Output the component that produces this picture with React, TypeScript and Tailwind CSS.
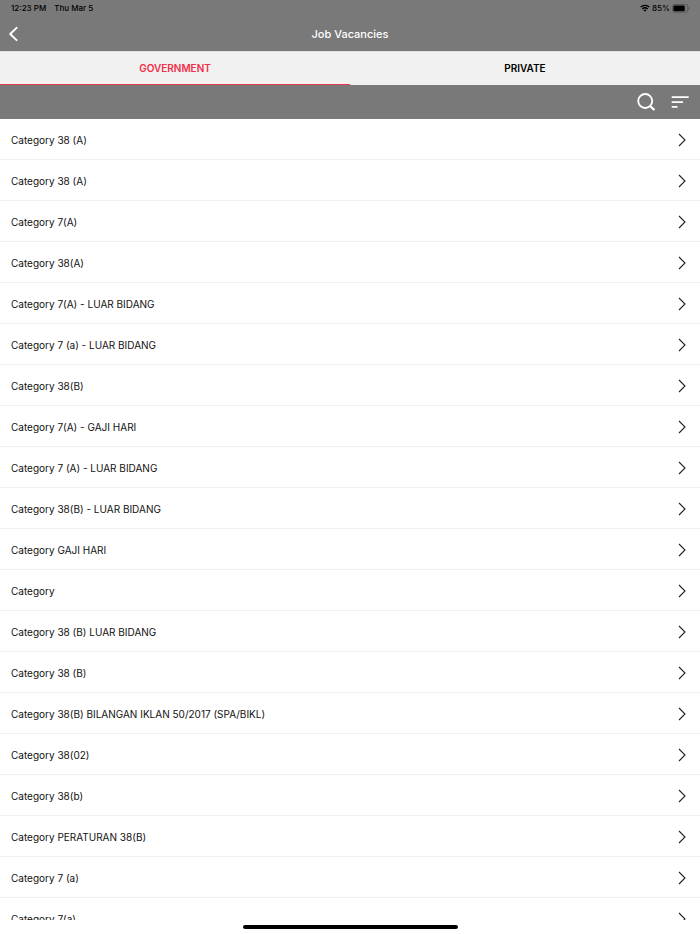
const categories = [
  "Category 38 (A)",
  "Category 38 (A)",
  "Category 7(A)",
  "Category 38(A)",
  "Category 7(A) - LUAR BIDANG",
  "Category 7 (a) - LUAR BIDANG",
  "Category 38(B)",
  "Category 7(A) - GAJI HARI",
  "Category 7 (A) - LUAR BIDANG",
  "Category 38(B) - LUAR BIDANG",
  "Category GAJI HARI",
  "Category",
  "Category 38 (B) LUAR BIDANG",
  "Category 38 (B)",
  "Category 38(B) BILANGAN IKLAN 50/2017 (SPA/BIKL)",
  "Category 38(02)",
  "Category 38(b)",
  "Category PERATURAN 38(B)",
  "Category 7 (a)",
  "Category 7(a)",
];

function StatusBar() {
  return (
    <div className="flex h-4 items-center justify-between pl-[11px] pr-[10px] text-[8px] leading-4 font-medium text-black">
      <div className="flex gap-2">
        <span>12:23 PM</span>
        <span>Thu Mar 5</span>
      </div>
      <div className="flex items-center gap-[2px]">
        <svg width="10" height="8" viewBox="0 0 10 8" fill="none" stroke="currentColor" strokeWidth="1.3" aria-hidden="true">
          <path d="M0.6 3.1C3.1 0.7 6.9 0.7 9.4 3.1" />
          <path d="M2.3 5C3.9 3.5 6.1 3.5 7.7 5" />
          <path d="M5 7.7 3.5 6.1Q5 4.9 6.5 6.1Z" fill="currentColor" stroke="none" />
        </svg>
        <span>85%</span>
        <svg width="18" height="9" viewBox="0 0 18 9" aria-hidden="true">
          <rect x="0.4" y="0.5" width="15.4" height="7.8" rx="2.2" fill="none" stroke="#4f4f4f" strokeWidth="0.7" />
          <rect x="1.4" y="1.5" width="11.4" height="5.8" rx="1.2" fill="#000" />
          <path d="M16.6 3v2.8c1.2-.4 1.2-2.4 0-2.8Z" fill="#4f4f4f" />
        </svg>
      </div>
    </div>
  );
}

function NavBar() {
  return (
    <div className="grid h-[35px] grid-cols-[1fr_auto_1fr] items-center">
      <button type="button" aria-label="Back" className="flex h-full w-10 items-center pl-2 text-white">
        <svg width="11" height="16" viewBox="0 0 11 16" fill="none" stroke="currentColor" strokeWidth="2" strokeLinecap="round" strokeLinejoin="round" aria-hidden="true">
          <path d="M8.6 1.9 2.2 8 8.6 14.1" />
        </svg>
      </button>
      <h1 className="text-[11px] leading-4 font-medium text-white">Job Vacancies</h1>
    </div>
  );
}

function Tabs() {
  return (
    <div role="tablist" className="grid h-[34px] grid-cols-2 border-t border-[#e2e2e2] bg-[#f1f1f1] text-[10px] leading-4 font-semibold">
      <button type="button" role="tab" aria-selected="true" className="border-b border-[#e8394f] text-[#f02f49]">
        GOVERNMENT
      </button>
      <button type="button" role="tab" aria-selected="false" className="border-b border-[#f1f1f1] text-black">
        PRIVATE
      </button>
    </div>
  );
}

function Toolbar() {
  return (
    <div className="flex h-[34px] items-center justify-end gap-[14px] pr-[10px] text-white">
      <button type="button" aria-label="Search">
        <svg width="20" height="20" viewBox="0 0 20 20" fill="none" stroke="currentColor" strokeWidth="1.8" strokeLinecap="round" aria-hidden="true">
          <circle cx="9.2" cy="9" r="7" />
          <path d="M14.2 14.2 17.8 17.4" strokeWidth="2.2" />
        </svg>
      </button>
      <button type="button" aria-label="Sort">
        <svg width="20" height="20" viewBox="0 0 20 20" fill="currentColor" aria-hidden="true">
          <rect x="1.6" y="4.3" width="17.2" height="1.8" rx="0.6" />
          <rect x="1.6" y="9.2" width="11.5" height="1.8" rx="0.6" />
          <rect x="1.6" y="14" width="6" height="1.8" rx="0.6" />
        </svg>
      </button>
    </div>
  );
}

export default function App() {
  return (
    <div className="flex h-screen flex-col bg-white font-['Inter',sans-serif]">
      <header className="shrink-0 bg-[#797979]">
        <StatusBar />
        <NavBar />
        <Tabs />
        <Toolbar />
      </header>

      <main className="min-h-0 flex-1 overflow-hidden">
        <ul>
          {categories.map((name, idx) => (
            <li key={idx} className="border-b border-[#f0f0f0]">
              <a href="#" className="flex h-10 items-center justify-between pt-[2px] pr-[13px] pl-[11px] text-[10px] leading-4 text-[#111]">
                <span>{name}</span>
                <svg width="10" height="14" viewBox="0 0 10 14" fill="none" stroke="#222" strokeWidth="1.1" aria-hidden="true">
                  <path d="M2 1 8 7 2 13" />
                </svg>
              </a>
            </li>
          ))}
        </ul>
      </main>

      <footer className="flex h-[14px] shrink-0 justify-center bg-white pt-[5px]">
        <div className="h-1 w-[215px] rounded-full bg-black" />
      </footer>
    </div>
  );
}
